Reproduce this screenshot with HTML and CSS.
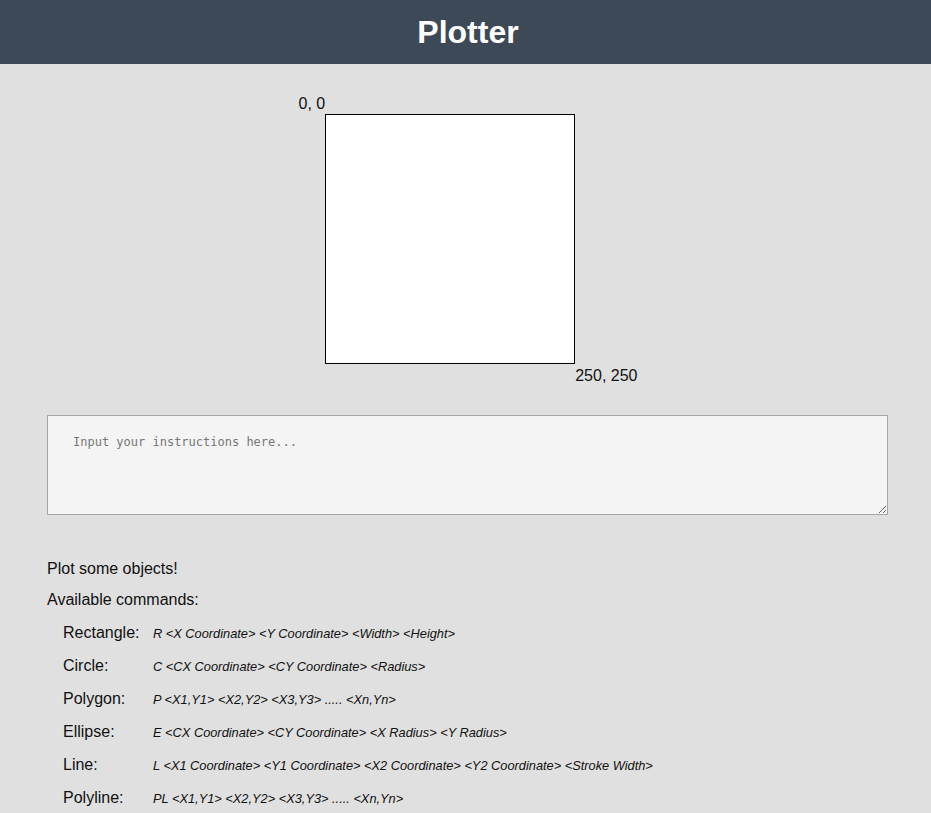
FILE: index.html
```html
<!DOCTYPE html>
<html>
<head>
<meta charset="utf-8">
<title>Plotter</title>
<link rel="stylesheet" href="styles.css">
</head>
<body>
<header class="topbar"><h1 class="title">Plotter</h1></header>
<main class="main">
  <section class="plot">
    <div class="corner corner-start">0, 0</div>
    <svg class="canvas" width="250" height="250" viewBox="0 0 250 250"></svg>
    <div class="corner corner-end">250, 250</div>
  </section>
  <textarea class="input" placeholder="Input your instructions here..."></textarea>
  <section class="help">
    <p class="help-line intro">Plot some objects!</p>
    <p class="help-line subtitle">Available commands:</p>
    <div class="commands">
      <span class="cmd-name">Rectangle:</span><span class="cmd-syntax">R &lt;X Coordinate&gt; &lt;Y Coordinate&gt; &lt;Width&gt; &lt;Height&gt;</span>
      <span class="cmd-name">Circle:</span><span class="cmd-syntax">C &lt;CX Coordinate&gt; &lt;CY Coordinate&gt; &lt;Radius&gt;</span>
      <span class="cmd-name">Polygon:</span><span class="cmd-syntax">P &lt;X1,Y1&gt; &lt;X2,Y2&gt; &lt;X3,Y3&gt; ..... &lt;Xn,Yn&gt;</span>
      <span class="cmd-name">Ellipse:</span><span class="cmd-syntax">E &lt;CX Coordinate&gt; &lt;CY Coordinate&gt; &lt;X Radius&gt; &lt;Y Radius&gt;</span>
      <span class="cmd-name">Line:</span><span class="cmd-syntax">L &lt;X1 Coordinate&gt; &lt;Y1 Coordinate&gt; &lt;X2 Coordinate&gt; &lt;Y2 Coordinate&gt; &lt;Stroke Width&gt;</span>
      <span class="cmd-name">Polyline:</span><span class="cmd-syntax">PL &lt;X1,Y1&gt; &lt;X2,Y2&gt; &lt;X3,Y3&gt; ..... &lt;Xn,Yn&gt;</span>
    </div>
  </section>
</main>
</body>
</html>
```

FILE: styles.css
```css
* { box-sizing: border-box; }
html, body {
  margin: 0;
  padding: 0;
  background: #e0e0e0;
  font-family: "Liberation Sans", Arial, sans-serif;
  font-size: 16px;
  color: #111;
}
.topbar {
  height: 64px;
  background: #3d4957;
  display: flex;
  align-items: center;
  justify-content: center;
}
.title {
  margin: 0;
  color: #fff;
  font-size: 32px;
  font-weight: bold;
  line-height: 37px;
  padding-left: 5px;
}
.main {
  padding: 0 43px 0 47px;
}
.plot {
  display: grid;
  grid-template-columns: auto 250px auto;
  grid-template-rows: 20px 250px 20px;
  justify-content: center;
  margin-top: 30px;
  padding-left: 1px;
}
.corner {
  line-height: 18px;
}
.corner-start {
  grid-column: 1;
  grid-row: 1;
  text-align: right;
  padding-top: 1px;
}
.canvas {
  grid-column: 2;
  grid-row: 2;
  display: block;
  background: #fff;
  border: 1px solid #000;
  width: 250px;
  height: 250px;
}
.corner-end {
  grid-column: 3;
  grid-row: 3;
  padding-top: 3px;
}
.input {
  display: block;
  width: 841px;
  height: 100px;
  margin: 31px 0 0 0;
  padding: 19px 25px;
  border: 1px solid #a6a6a6;
  background: #f4f4f4;
  font-family: "DejaVu Sans Mono", "Liberation Mono", monospace;
  font-size: 12px;
  color: #333;
  outline: none;
}
.input::placeholder {
  color: #777;
}
.help {
  margin-top: 45px;
}
.help-line {
  margin: 0;
  line-height: 18px;
}
.intro {
  height: 31px;
}
.subtitle {
  height: 33px;
}
.commands {
  display: grid;
  grid-template-columns: 90px auto;
  grid-auto-rows: 33.1px;
  align-items: baseline;
  padding-left: 16px;
}
.cmd-name {
  line-height: 18px;
}
.cmd-syntax {
  font-style: italic;
  font-size: 12.8px;
  line-height: 18px;
}
```
